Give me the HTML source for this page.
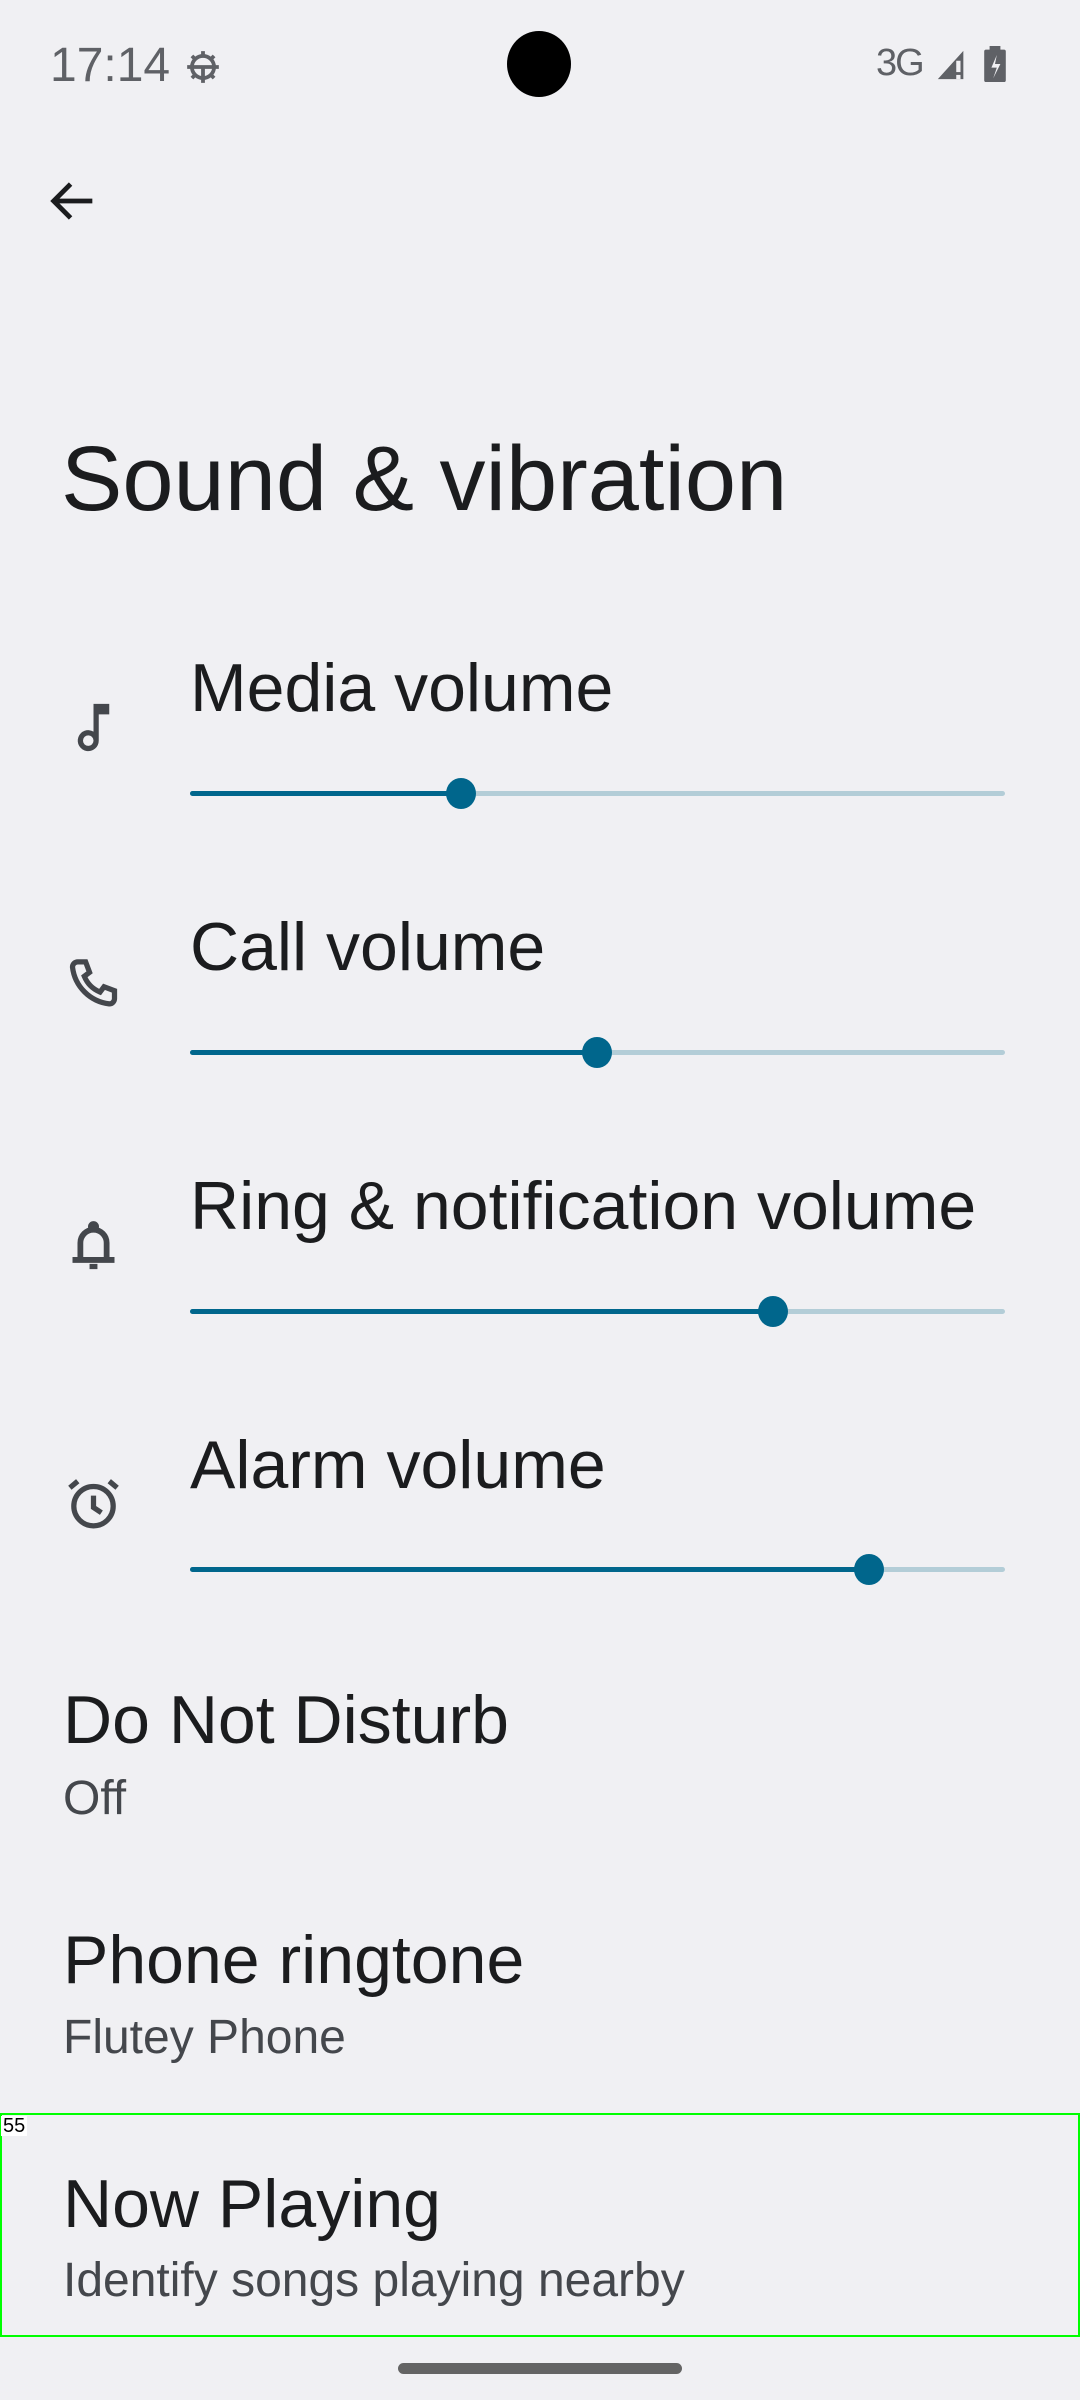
<!DOCTYPE html>
<html><head><meta charset="utf-8"><style>
html,body{margin:0;padding:0}
body{width:1080px;height:2400px;background:#f0f0f3;position:relative;overflow:hidden;font-family:"Liberation Sans",sans-serif;color:#1b1c1e}
.t{position:absolute;white-space:nowrap;line-height:1}
.h{font-size:68px;color:#1b1c1e}
.s{font-size:48px;color:#44474c}
.track{position:absolute;left:190px;width:815px;height:5px;border-radius:3px;background:#b3cdd7}
.act{position:absolute;left:0;top:0;height:5px;border-radius:3px;background:#00668c}
.thumb{position:absolute;top:-13px;width:30px;height:31px;border-radius:50%;background:#00668c;margin-left:-15px}
svg.ic{position:absolute;width:63px;height:63px}
</style></head><body>
<div class="t" style="left:50px;top:42px;font-size:48px;color:#5f6166">17:14</div>
<svg style="position:absolute;left:184px;top:48px;width:38px;height:38px" viewBox="0 0 24 24" fill="none" stroke="#5f6166" stroke-width="2.4"><circle cx="12" cy="12" r="7"/><path d="M5 12h14M12 12v7M12 2v3M12 19v3M2 12h3M19 12h3M5 5l2 2M17 17l2 2M19 5l-2 2M5 19l2-2"/></svg>
<div style="position:absolute;left:507px;top:31px;width:64px;height:66px;border-radius:50%;background:#000"></div>
<div class="t" style="left:876px;top:44px;font-size:38px;color:#5f6166;letter-spacing:-2px">3G</div>
<svg style="position:absolute;left:934px;top:48px;width:36px;height:34px" viewBox="0 0 24 24"><path d="M2 22L20 2v20z" fill="#5f6166"/><rect x="15" y="9" width="3" height="8" fill="#f0f0f3"/><rect x="15" y="19" width="3" height="3" fill="#f0f0f3"/></svg>
<svg style="position:absolute;left:984px;top:46px;width:22px;height:36px" viewBox="0 0 12 20"><rect x="0" y="2" width="12" height="18" rx="1" fill="#5f6166"/><rect x="3" y="0" width="6" height="3" fill="#5f6166"/><path d="M7 5L4 12h3l-2 6 4-8H6z" fill="#f0f0f3"/></svg>
<svg style="position:absolute;left:44px;top:172px;width:58px;height:58px" viewBox="0 0 24 24" fill="none" stroke="#1b1c1e" stroke-width="2"><path d="M20 12H5M11 5l-7 7 7 7"/></svg>
<div class="t" style="left:61px;top:433px;font-size:92px">Sound &amp; vibration</div>

<svg class="ic" style="left:62px;top:696px" viewBox="0 0 24 24"><path d="M12 3v10.55A4 4 0 1 0 14 17V7h4V3z" fill="#44474c"/><circle cx="10" cy="17" r="2" fill="#f0f0f3"/></svg>
<div class="t h" style="left:190px;top:654px">Media volume</div>
<div class="track" style="top:791px"><div class="act" style="width:271px"></div><div class="thumb" style="left:271px"></div></div>

<svg class="ic" style="left:62px;top:954px" viewBox="0 0 24 24" fill="none" stroke="#44474c" stroke-width="2"><path d="M6 3h3l1.5 4-2 1.5a11 11 0 0 0 6 6l1.5-2 4 1.5v3a2 2 0 0 1-2 2A16 16 0 0 1 4 5a2 2 0 0 1 2-2z"/></svg>
<div class="t h" style="left:190px;top:913px">Call volume</div>
<div class="track" style="top:1050px"><div class="act" style="width:407px"></div><div class="thumb" style="left:407px"></div></div>

<svg class="ic" style="left:62px;top:1214px" viewBox="0 0 24 24" fill="none" stroke="#44474c" stroke-width="2.2"><path d="M7 17v-6a5 5 0 0 1 10 0v6M4 17.5h16"/><path d="M10.5 20h3" stroke-width="2"/><circle cx="12" cy="4.8" r="1" fill="#44474c"/></svg>
<div class="t h" style="left:190px;top:1172px">Ring &amp; notification volume</div>
<div class="track" style="top:1309px"><div class="act" style="width:583px"></div><div class="thumb" style="left:583px"></div></div>

<svg class="ic" style="left:62px;top:1472px" viewBox="0 0 24 24" fill="none" stroke="#44474c" stroke-width="2"><circle cx="12" cy="13" r="7.5"/><path d="M12 9v4.5l3 2M3 6l3-2.5M21 6l-3-2.5"/></svg>
<div class="t h" style="left:190px;top:1431px">Alarm volume</div>
<div class="track" style="top:1567px"><div class="act" style="width:679px"></div><div class="thumb" style="left:679px"></div></div>

<div class="t h" style="left:63px;top:1686px">Do Not Disturb</div>
<div class="t s" style="left:63px;top:1775px">Off</div>
<div class="t h" style="left:63px;top:1926px">Phone ringtone</div>
<div class="t s" style="left:63px;top:2014px">Flutey Phone</div>

<div style="position:absolute;left:0;top:2113px;width:1076px;height:220px;border:2px solid #00ff00"></div>
<div class="t" style="left:1px;top:2116px;font-size:20px;background:#fff;color:#000;padding:0 2px">55</div>
<div class="t h" style="left:63px;top:2170px">Now Playing</div>
<div class="t s" style="left:63px;top:2257px">Identify songs playing nearby</div>

<div style="position:absolute;left:398px;top:2363px;width:284px;height:11px;border-radius:6px;background:#646464"></div>
</body></html>
